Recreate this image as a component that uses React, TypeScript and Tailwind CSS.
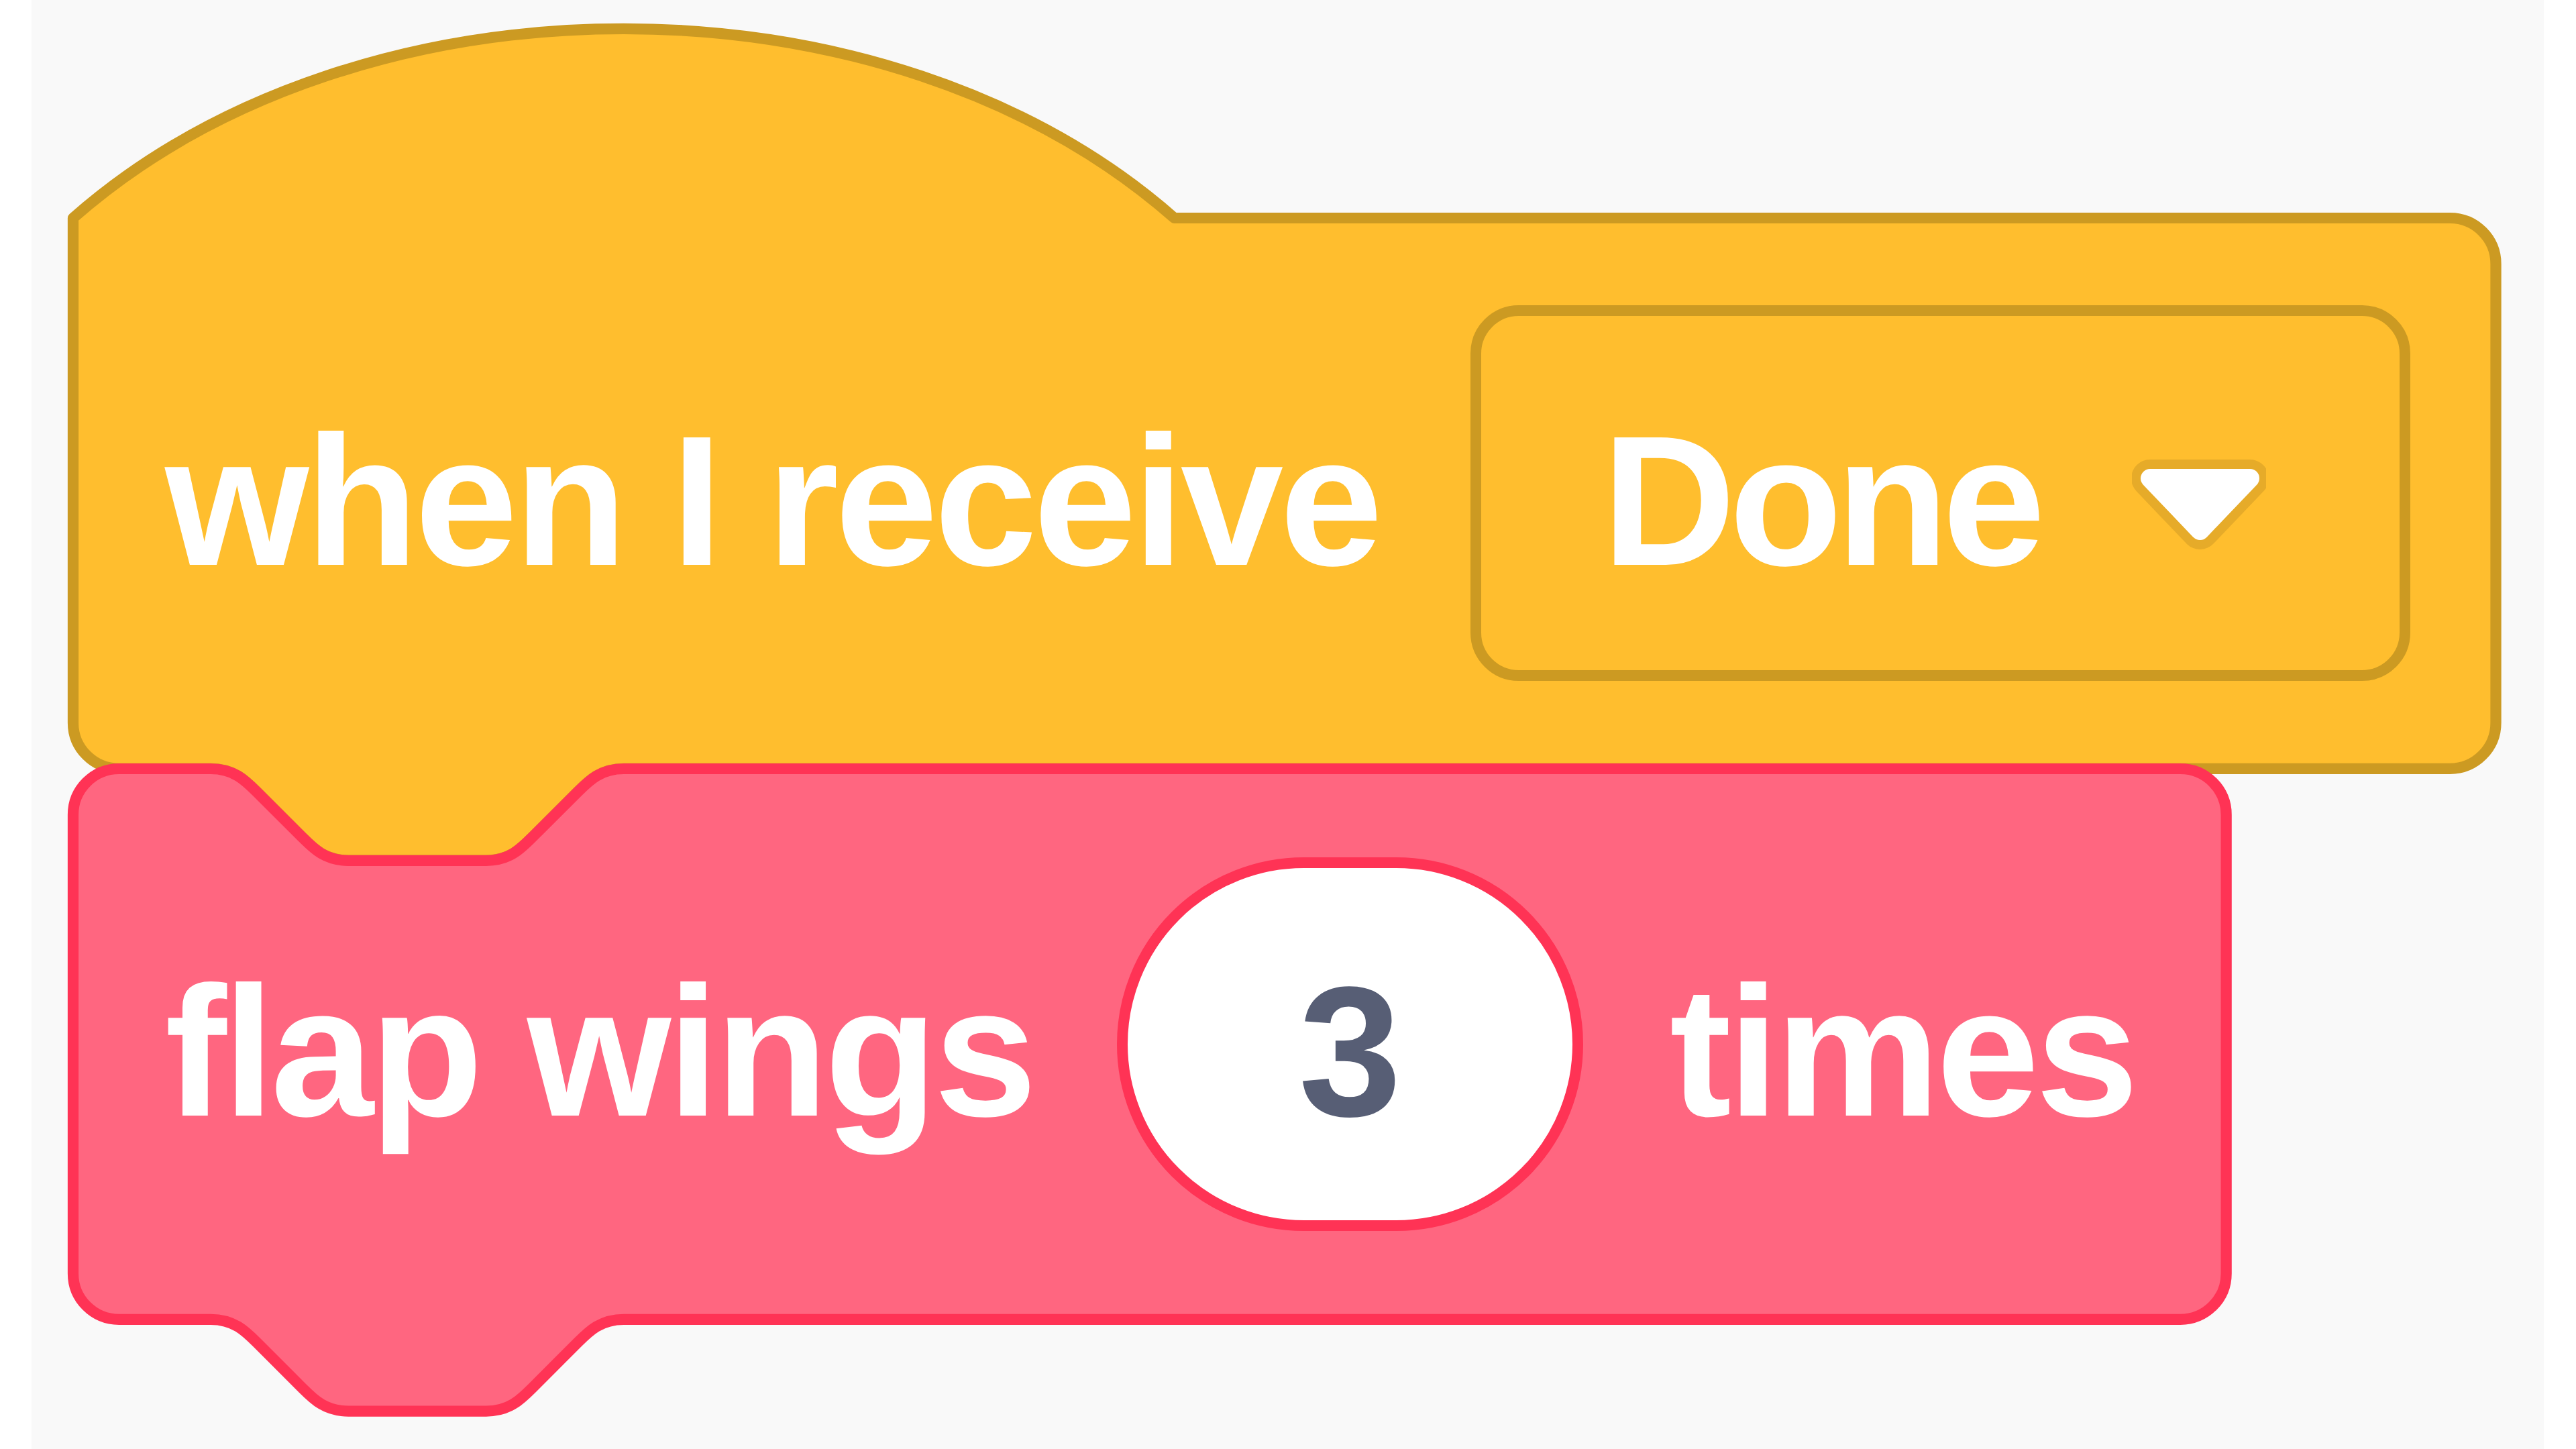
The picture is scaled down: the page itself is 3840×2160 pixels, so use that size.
import React from "react";

const S = 17.1;

const YELLOW = "#ffbe2e";
const YELLOW_EDGE = "#cc9a22";
const PINK = "#ff6680";
const PINK_EDGE = "#ff3355";

const notchBottom =
  "H 48 c -2 0 -3 1 -4 2 l -4 4 c -1 1 -2 2 -4 2 h -12 c -2 0 -3 -1 -4 -2 l -4 -4 c -1 -1 -2 -2 -4 -2 H 4 a 4 4 0 0 1 -4 -4 Z";

function hatPath(w: number) {
  return `M 0 0 c 25 -22 71 -22 96 0 H ${w - 4} a 4 4 0 0 1 4 4 V 44 a 4 4 0 0 1 -4 4 ${notchBottom}`;
}

function stackPath(w: number) {
  return `M 0 4 A 4 4 0 0 1 4 0 H 12 c 2 0 3 1 4 2 l 4 4 c 1 1 2 2 4 2 h 12 c 2 0 3 -1 4 -2 l 4 -4 c 1 -1 2 -2 4 -2 H ${w - 4} a 4 4 0 0 1 4 4 V 44 a 4 4 0 0 1 -4 4 ${notchBottom}`;
}

function BlockShape({ d, w, fill, stroke }: { d: string; w: number; fill: string; stroke: string }) {
  return (
    <svg
      className="absolute inset-0 overflow-visible"
      width="100%"
      height="100%"
      viewBox={`0 0 ${w} 48`}
      preserveAspectRatio="none"
    >
      <path d={d} fill={fill} stroke={stroke} strokeWidth={0.95} strokeLinejoin="round" />
    </svg>
  );
}

function DropArrow() {
  return (
    <svg width="200" height="137" viewBox="0 0 200 137" className="shrink-0 mt-[33px]">
      <polygon points="27,30 176,30 101.5,108" fill="#e6ab29" stroke="#e6ab29" strokeWidth={56} strokeLinejoin="round" />
      <polygon points="27,30 176,30 101.5,108" fill="#ffffff" stroke="#ffffff" strokeWidth={28} strokeLinejoin="round" />
    </svg>
  );
}

const label =
  "shrink-0 whitespace-nowrap text-[276px] leading-none font-bold tracking-[-0.02em] text-white mt-[21px]";

export default function App() {
  const hatW = 211.2;
  const flapW = 187.7;

  return (
    <div className="w-[3840px] h-[2160px] bg-white font-['Liberation_Sans',Arial,sans-serif]">
      <div className="ml-[47px] w-[3745px] h-full bg-[#f9f9f9] pl-[62px] pt-[325px] flex flex-col">
        {/* when I receive [Done v] */}
        <div className="relative" style={{ width: hatW * S, height: 48 * S }}>
          <BlockShape d={hatPath(hatW)} w={hatW} fill={YELLOW} stroke={YELLOW_EDGE} />
          <div className="relative flex items-center h-full pl-[137px]">
            <span className={`${label} w-[1817px]`}>when I receive</span>
            <div className="ml-[129px] w-[1401px] h-[560px] shrink-0 border-[16px] border-[#cc9a22] rounded-[72px] flex items-center justify-between pl-[180px] pr-[199px]">
              <span className="whitespace-nowrap text-[276px] leading-none font-bold tracking-[-0.035em] text-white mt-[22px]">
                Done
              </span>
              <DropArrow />
            </div>
          </div>
        </div>

        {/* flap wings (3) times */}
        <div className="relative" style={{ width: flapW * S, height: 48 * S }}>
          <BlockShape d={stackPath(flapW)} w={flapW} fill={PINK} stroke={PINK_EDGE} />
          <div className="relative flex items-center h-full pl-[137px]">
            <span className={`${label} w-[1290px]`}>flap wings</span>
            <div className="ml-[129px] w-[695px] h-[557px] shrink-0 rounded-full bg-white border-[16px] border-[#ff3355] flex items-center justify-center">
              <span className="text-[276px] leading-none font-bold text-[#575e75] mt-[22px]">3</span>
            </div>
            <span className={`${label} ml-[129px]`}>times</span>
          </div>
        </div>
      </div>
    </div>
  );
}
